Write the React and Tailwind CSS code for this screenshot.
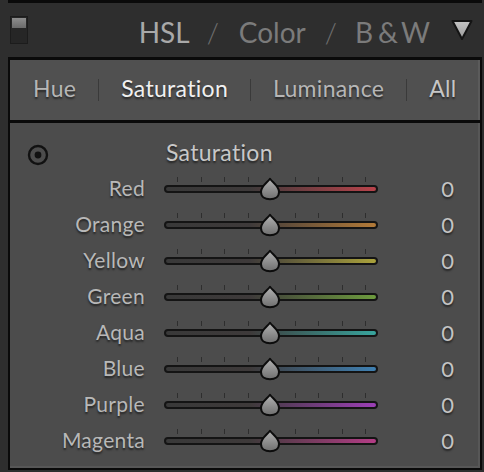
import React from "react";

const font = { fontFamily: "Lato, 'Open Sans', sans-serif" };

const rows = [
  { name: "Red", color: "#b8434b" },
  { name: "Orange", color: "#b27a38" },
  { name: "Yellow", color: "#aaa23c" },
  { name: "Green", color: "#6d9b3e" },
  { name: "Aqua", color: "#38a49d" },
  { name: "Blue", color: "#3f80b2" },
  { name: "Purple", color: "#9c3fb6" },
  { name: "Magenta", color: "#b43d86" },
];

function Thumb() {
  return (
    <svg width="24" height="24" viewBox="0 0 24 24" className="absolute left-[94px] top-[7px]">
      <defs>
        <linearGradient id="tg" x1="0" y1="0" x2="0" y2="1">
          <stop offset="0" stopColor="#b2b2b2" />
          <stop offset="1" stopColor="#6f6f6f" />
        </linearGradient>
      </defs>
      <path
        d="M12 1.8 C14.5 5.5 21 9 21 15 C21 19.8 17 22.2 12 22.2 C7 22.2 3 19.8 3 15 C3 9 9.5 5.5 12 1.8 Z"
        fill="url(#tg)"
        stroke="#0c0c0c"
        strokeWidth="2"
        strokeLinejoin="round"
      />
    </svg>
  );
}

function Slider({ color }) {
  return (
    <div className="relative w-[214px] h-[36px]">
      <div className="flex justify-between pl-[13px] pr-[12px] pt-[7px] h-[12px]">
        {Array.from({ length: 9 }).map((_, i) => (
          <div key={i} className={i === 4 ? "w-px h-[5px]" : "w-px h-[5px] bg-[#2e2e2e]"} />
        ))}
      </div>
      <div
        className="mt-[3px] h-[8px] rounded-full border-2 border-[#141414]"
        style={{ background: `linear-gradient(to right, #393939 0%, #3e3a3a 40%, ${color} 100%)` }}
      />
      <Thumb />
    </div>
  );
}

const shadow = "[text-shadow:0_2px_2px_rgba(0,0,0,0.55)]";

export default function App() {
  return (
    <div className="w-[484px] h-[472px] bg-[#2e2e2e] overflow-hidden" style={font}>
      <div className="ml-[8px] mr-[2px] h-[3px] bg-[#0a0a0a]" />
      <div className="h-[54px] flex items-center">
        <div className="ml-[10px] w-[18px] h-[28px] border border-[#1c1c1c] bg-[#262626] flex flex-col p-[1px]">
          <div className="h-[10px] bg-gradient-to-b from-[#8e8e8e] to-[#6a6a6a]" />
        </div>
        <div className="flex-1" />
        <div className="flex items-center text-[28px] leading-none pt-[4px]">
          <span className="text-[#a9a9a9]">HSL</span>
          <span className="text-[#6f6f6f] font-light ml-[17px]">/</span>
          <span className="text-[#7b7b7b] ml-[20px]">Color</span>
          <span className="text-[#6f6f6f] font-light ml-[19px]">/</span>
          <span className="text-[#7b7b7b] ml-[18px]">B</span>
          <span className="text-[#7b7b7b] ml-[5px]">&amp;</span>
          <span className="text-[#7b7b7b] ml-[3px]">W</span>
        </div>
        <svg width="24" height="24" viewBox="0 0 24 24" className="ml-[20px] mr-[10px]">
          <defs>
            <linearGradient id="hg" x1="0" y1="0" x2="0" y2="1">
              <stop offset="0" stopColor="#c4c4c4" />
              <stop offset="1" stopColor="#9a9a9a" />
            </linearGradient>
          </defs>
          <path d="M2.5 3 L21.5 3 L12 21 Z" fill="url(#hg)" stroke="#141414" strokeWidth="2" strokeLinejoin="round" />
        </svg>
      </div>
      <div className="ml-[8px] mr-[2px] border-2 border-t-[3px] border-[#0a0a0a] bg-[#0a0a0a] flex flex-col gap-[3px]">
        <div className="h-[60px] bg-[#505050] border-r-2 border-[#5b5b5b] flex items-center pl-[23px] gap-[22px] text-[23px] tracking-[0.3px] pb-[4px]">
          <span className={`text-[#b6b6b6] ${shadow}`}>Hue</span>
          <div className="w-px h-[22px] bg-[#3a3a3a] mt-[4px]" />
          <span className={`text-[#f0f0f0] ${shadow}`}>Saturation</span>
          <div className="w-px h-[22px] bg-[#3a3a3a] mt-[4px]" />
          <span className={`text-[#b6b6b6] ${shadow}`}>Luminance</span>
          <div className="w-px h-[22px] bg-[#3a3a3a] mt-[4px]" />
          <span className={`text-[#c6c6c6] ${shadow}`}>All</span>
        </div>
        <div className="h-[345px] bg-[#4c4c4c] border-r-2 border-b-2 border-[#575757] pt-[11px]">
          <div className="flex items-center h-[36px]">
            <div className="w-[135px] pl-[17px] flex items-center">
              <svg width="22" height="22" viewBox="0 0 22 22" className="mt-[5px]">
                <circle cx="11" cy="11" r="9" fill="none" stroke="#111" strokeWidth="2.4" />
                <circle cx="11" cy="11" r="3.4" fill="#111" />
              </svg>
            </div>
            <span className={`ml-[21px] text-[23px] tracking-[0.3px] text-[#c8c8c8] ${shadow}`}>Saturation</span>
          </div>
          {rows.map((r) => (
            <div key={r.name} className="flex items-center h-[36px]">
              <div className={`w-[135px] text-right text-[21px] tracking-[0.3px] text-[#b8b8b8] ${shadow}`}>{r.name}</div>
              <div className="ml-[19px]">
                <Slider color={r.color} />
              </div>
              <div className={`flex-1 text-right pr-[24px] text-[22px] text-[#c4c4c4] ${shadow}`}>0</div>
            </div>
          ))}
        </div>
      </div>
    </div>
  );
}
